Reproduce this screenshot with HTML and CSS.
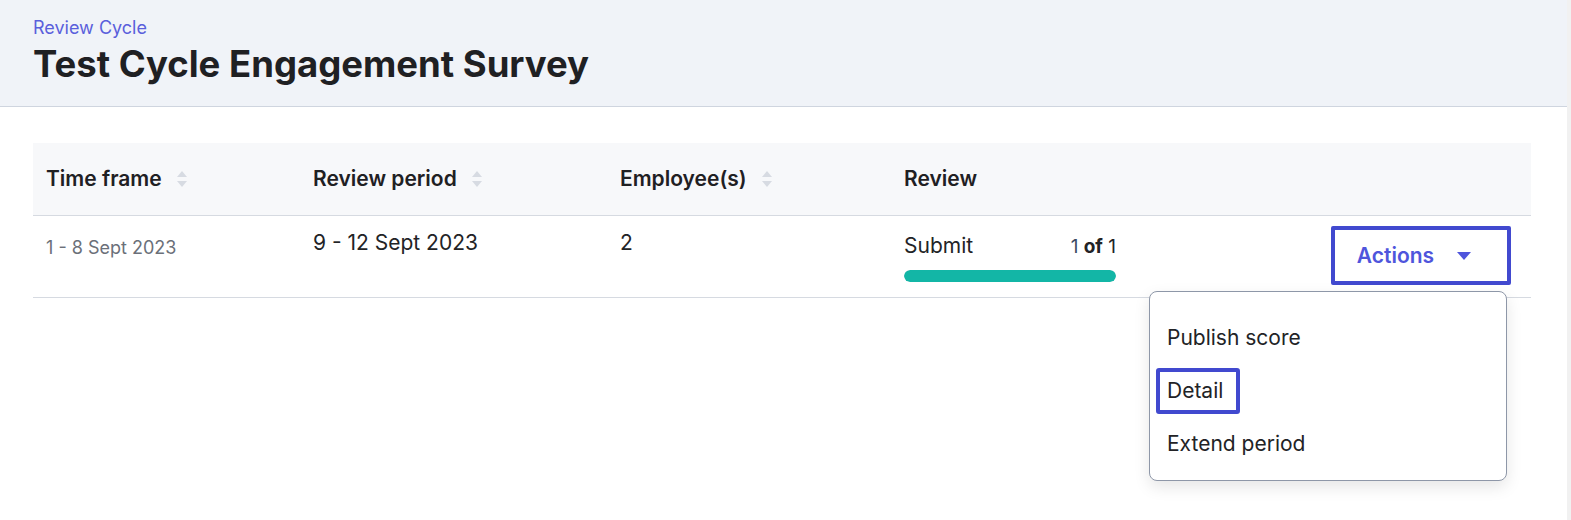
FILE: index.html
```html
<!DOCTYPE html>
<html lang="en">
<head>
<meta charset="utf-8">
<title>Test Cycle Engagement Survey</title>
<link rel="stylesheet" href="styles.css">
</head>
<body>
<div class="page">
  <header class="page-header">
    <div class="breadcrumb">Review Cycle</div>
    <h1 class="title">Test Cycle Engagement Survey</h1>
  </header>
  <main class="content">
    <div class="table">
      <div class="thead">
        <div class="th c1">Time frame <span class="sort"><svg width="12" height="20" viewBox="0 0 12 20"><path d="M6 2 L11 8 H1 Z" fill="#d7dbe2"/><path d="M6 18 L11 12 H1 Z" fill="#d7dbe2"/></svg></span></div>
        <div class="th c2">Review period <span class="sort"><svg width="12" height="20" viewBox="0 0 12 20"><path d="M6 2 L11 8 H1 Z" fill="#d7dbe2"/><path d="M6 18 L11 12 H1 Z" fill="#d7dbe2"/></svg></span></div>
        <div class="th c3">Employee(s) <span class="sort"><svg width="12" height="20" viewBox="0 0 12 20"><path d="M6 2 L11 8 H1 Z" fill="#d7dbe2"/><path d="M6 18 L11 12 H1 Z" fill="#d7dbe2"/></svg></span></div>
        <div class="th c4">Review</div>
      </div>
      <div class="row">
        <div class="td c1 muted">1 - 8 Sept 2023</div>
        <div class="td c2">9 - 12 Sept 2023</div>
        <div class="td c3">2</div>
        <div class="td c4">
          <div class="progress">
            <div class="progress-top">
              <span>Submit</span>
              <span class="count"><span class="num">1</span> <b>of</b> 1</span>
            </div>
            <div class="bar"><div class="fill" style="width:100%"></div></div>
          </div>
        </div>
        <div class="td c5">
          <div class="actions-wrap">
            <button class="actions">Actions <svg width="16" height="10" viewBox="0 0 16 10"><path d="M1 1 H15 L8 9 Z" fill="#4f55dc"/></svg></button>
            <div class="menu">
              <div class="menu-item">Publish score</div>
              <div class="menu-item"><span class="focused">Detail</span></div>
              <div class="menu-item">Extend period</div>
            </div>
          </div>
        </div>
      </div>
    </div>
  </main>
</div>
</body>
</html>
```
FILE: styles.css
```css
* { box-sizing: border-box; }
html, body { margin: 0; padding: 0; }
body {
  background: #f1f1f1;
  font-family: Inter, "Noto Sans", sans-serif;
  color: #222326;
}
.page {
  margin-right: 4px;
  background: #ffffff;
  height: 520px;
  overflow: hidden;
}
.page-header {
  background: #f0f3f8;
  padding: 17px 33px 0;
  height: 107px;
  border-bottom: 1px solid #cfd5df;
}
.breadcrumb {
  font-size: 18px;
  color: #5a5fdc;
  line-height: 22px;
}
.title {
  margin: 3px 0 0;
  font-size: 36.5px;
  font-weight: 700;
  line-height: 44px;
  color: #1f2023;
}
.content {
  padding: 36px 36px 0 33px;
  background: #fff;
  border-top-left-radius: 6px;
}
.table { width: 100%; }
.thead {
  display: flex;
  background: #f7f8fa;
  height: 73px;
  align-items: center;
  border-bottom: 1px solid #d6dae1;
}
.th {
  font-size: 21px;
  font-weight: 600;
  padding-left: 13px;
  display: flex;
  align-items: center;
  gap: 14px;
  color: #1f2023;
  line-height: 26px;
}
.sort { display: flex; }
.c1 { width: 267px; }
.c2 { width: 307px; }
.c3 { width: 284px; }
.c4 { width: 240px; }
.c5 { flex: 1; }
.row {
  display: flex;
  height: 82px;
  border-bottom: 1px solid #d6dae1;
  align-items: flex-start;
}
.td {
  padding-left: 13px;
  font-size: 21px;
  color: #222326;
  padding-top: 14px;
  line-height: 26px;
}
.td.muted {
  font-size: 18px;
  color: #6b7079;
  padding-top: 19px;
}
.progress { width: 212px; }
.progress-top {
  display: flex;
  justify-content: space-between;
  align-items: baseline;
  padding-top: 3px;
}
.count { font-size: 19px; }
.count .num { color: #3d4a63; }
.count b { font-weight: 700; }
.bar {
  margin-top: 10px;
  height: 12px;
  border-radius: 6px;
  background: #e5e7eb;
  overflow: hidden;
}
.fill { height: 100%; background: #13b6a6; border-radius: 6px; }
.c5 {
  display: flex;
  justify-content: flex-end;
  padding-top: 10px;
  padding-right: 20px;
}
.actions-wrap { position: relative; }
.actions {
  width: 180px;
  height: 59px;
  border: 4px solid #4149cf;
  border-radius: 2px;
  background: #fff;
  font-family: inherit;
  font-size: 21px;
  font-weight: 600;
  color: #4f55dc;
  display: flex;
  align-items: center;
  justify-content: center;
  gap: 22px;
  padding: 0 13px 0 0;
}
.menu {
  position: absolute;
  top: 65px;
  right: 4px;
  width: 358px;
  height: 190px;
  background: #fff;
  border: 1px solid #8e97a8;
  border-radius: 8px;
  box-shadow: 0 6px 16px rgba(0,0,0,0.10);
  padding: 33px 0 0 17px;
}
.menu-item {
  font-size: 21px;
  line-height: 26px;
  height: 53px;
  color: #222326;
  display: flex;
  align-items: flex-start;
}
.menu-item .focused {
  display: inline-block;
  border: 4px solid #4149cf;
  border-radius: 3px;
  padding: 6px 13px 6px 7px;
  margin: -10px 0 0 -11px;
}
```
